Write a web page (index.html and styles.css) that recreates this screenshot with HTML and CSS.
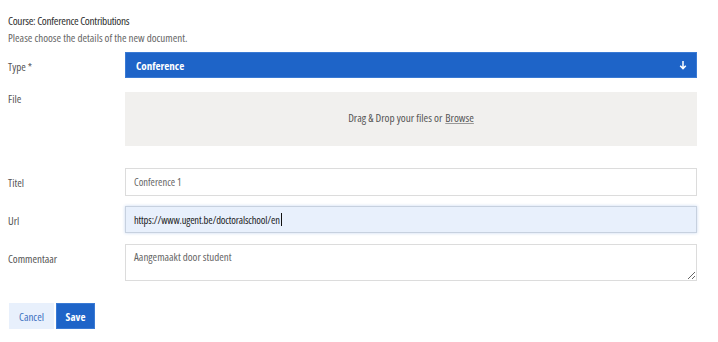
FILE: index.html
```html
<!DOCTYPE html>
<html>
<head>
<meta charset="utf-8">
<link rel="stylesheet" href="styles.css">
</head>
<body>
<div class="page">
  <h1 class="title">Course: Conference Contributions</h1>
  <p class="subtitle">Please choose the details of the new document.</p>
  <div class="form">
    <div class="row row-type">
      <label class="label">Type *</label>
      <div class="select">
        <span class="select-text">Conference</span>
        <svg class="arrow" width="8" height="10" viewBox="0 0 8 10"><path d="M4 1 V8.5 M1.2 5.8 L4 8.6 L6.8 5.8" stroke="#fff" stroke-width="1.5" fill="none"/></svg>
      </div>
    </div>
    <div class="row row-file">
      <label class="label label-top">File</label>
      <div class="drop">Drag &amp; Drop your files or <span class="browse">Browse</span></div>
    </div>
    <div class="row row-titel">
      <label class="label">Titel</label>
      <div class="input">Conference 1</div>
    </div>
    <div class="row row-url">
      <label class="label">Url</label>
      <div class="input input-focus">https://www.ugent.be/doctoralschool/en<span class="caret"></span></div>
    </div>
    <div class="row row-comment">
      <label class="label">Commentaar</label>
      <textarea class="textarea">Aangemaakt door student</textarea>
    </div>
  </div>
  <div class="buttons">
    <button class="btn btn-cancel">Cancel</button>
    <button class="btn btn-save">Save</button>
  </div>
</div>
</body>
</html>
```
FILE: styles.css
```css
* { box-sizing: border-box; }
body {
  margin: 0;
  background: #fff;
  font-family: "Open Sans", "Roboto", sans-serif;
  font-stretch: 82%;
  color: #444;
}
.page {
  padding: 13px 21px 0 8px;
}
.title {
  margin: 0;
  font-size: 11.3px;
  line-height: 15px;
  font-weight: normal;
  font-stretch: 75%;
  letter-spacing: -0.3px;
  color: #2f2f2f;
}
.subtitle {
  margin: 3px 0 0 0;
  font-size: 11px;
  line-height: 13px;
  color: #666;
}
.form {
  margin-top: 8px;
}
.row {
  display: grid;
  grid-template-columns: 117px 1fr;
}
.label {
  font-size: 11px;
  line-height: 14px;
  padding-top: 8px;
  color: #555;
}
.label-top { padding-top: 0; }
.select {
  height: 26px;
  background: #1e64c8;
  border: 1px solid #3a7ad4;
  display: flex;
  align-items: center;
  justify-content: space-between;
  padding: 0 9px 0 10px;
}
.select-text {
  color: #fff;
  font-weight: bold;
  font-stretch: 75%;
  font-size: 11px;
}
.arrow { display: block; }
.row-file { margin-top: 14px; }
.drop {
  height: 54px;
  background: #f1f0ee;
  display: flex;
  align-items: center;
  justify-content: center;
  padding-bottom: 3px;
  font-size: 11.2px;
  color: #555;
}
.browse {
  margin-left: 3px;
  text-decoration: underline;
  text-decoration-color: #999;
}
.row-titel { margin-top: 22px; }
.input {
  height: 28px;
  border: 1px solid #dcdcdc;
  background: #fff;
  padding: 0 8px;
  display: flex;
  align-items: center;
  font-size: 10.5px;
  color: #666;
}
.row-url { margin-top: 10px; }
.row-url .input { height: 27px; letter-spacing: -0.15px; }
.input-focus {
  background: #e8f0fc;
  border-color: #c7d1df;
  box-shadow: 0 0 3px rgba(30, 100, 200, 0.25);
  color: #222;
}
.caret {
  display: inline-block;
  width: 1px;
  height: 13px;
  background: #111;
  margin-left: 1px;
}
.row-comment { margin-top: 11px; }
.textarea {
  display: block;
  width: 100%;
  height: 37px;
  border: 1px solid #dcdcdc;
  padding: 4px 8px;
  font-family: inherit;
  font-stretch: inherit;
  font-size: 11px;
  color: #666;
  resize: vertical;
  margin: 0;
}
.buttons {
  display: flex;
  gap: 2px;
  margin-top: 22px;
  padding-left: 1px;
}
.btn {
  height: 26px;
  border: none;
  font-family: inherit;
  font-stretch: inherit;
  font-size: 11px;
  padding: 0;
  margin: 0;
}
.btn-cancel {
  width: 45px;
  background: #e8f0fc;
  color: #3b6fc0;
}
.btn-save {
  width: 39px;
  background: #1e64c8;
  color: #fff;
  font-weight: bold;
  font-stretch: 75%;
  border: 1px solid #3a7ad4;
}
```
